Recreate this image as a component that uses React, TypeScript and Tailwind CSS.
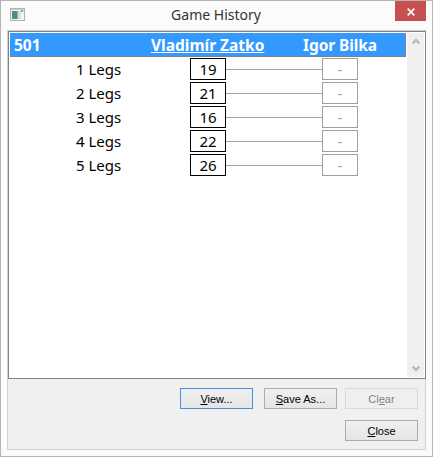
import clsx from "clsx";

// Types
type TRow = { legs: string; home: string; away: string };

// Constants
const rows: TRow[] = [
  { legs: "1 Legs", home: "19", away: "-" },
  { legs: "2 Legs", home: "21", away: "-" },
  { legs: "3 Legs", home: "16", away: "-" },
  { legs: "4 Legs", home: "22", away: "-" },
  { legs: "5 Legs", home: "26", away: "-" },
];

type TButtonProps = {
  before?: string;
  accessKey: string;
  after: string;
  focused?: boolean;
  disabled?: boolean;
};

function DialogButton({
  before = "",
  accessKey,
  after,
  focused,
  disabled,
}: TButtonProps) {
  return (
    <button
      type="button"
      disabled={disabled}
      className={clsx(
        "block h-[21px] w-[73px] border pt-px text-[11px] leading-[18px]",
        focused && "border-[#4a90d9]",
        !focused && !disabled && "border-[#acacac]",
        disabled
          ? "border-[#d9d9d9] bg-[#efefef] text-[#838383]"
          : "bg-linear-to-b from-[#f0f0f0] to-[#e5e5e5] text-black"
      )}
    >
      {before}
      <span className="underline underline-offset-1">{accessKey}</span>
      {after}
    </button>
  );
}

function Chevron({ down = false }: { down?: boolean }) {
  return (
    <svg
      viewBox="0 0 8 7"
      className={clsx("h-[7px] w-2", down && "rotate-180")}
      aria-hidden="true"
    >
      <path d="M0.8 5.4 4 2l3.2 3.4" fill="none" stroke="#b8b8b8" strokeWidth="2.3" />
    </svg>
  );
}

function TitleBar() {
  return (
    <header className="flex h-[29px] shrink-0 justify-between">
      <div className="w-[100px] pt-[7px] pl-[9px]">
        {/* Window icon */}
        <svg viewBox="0 0 15 13" className="h-[13px] w-[15px]" aria-hidden="true">
          <rect x="0.5" y="0.5" width="14" height="12" fill="#edf2f0" stroke="#adb4b1" />
          <rect x="1" y="1" width="13" height="1" fill="#c9d0ce" />
          <rect x="2" y="3" width="5" height="8" fill="#508c8e" />
          <rect x="7" y="3" width="1" height="8" fill="#8fb2af" />
          <rect x="8" y="3" width="3" height="8" fill="#d3dedb" />
          <rect x="11" y="3" width="2" height="8" fill="#f8fafa" />
          <rect x="11" y="2" width="2" height="2" fill="#79aaa6" />
        </svg>
      </div>
      <h1 className="-ml-px pt-1 font-['Noto_Sans'] text-[14px] leading-5 text-[#333]">
        Game History
      </h1>
      <div className="flex w-[100px] justify-end pr-[6px]">
        <button
          type="button"
          aria-label="Close"
          className="flex h-5 w-[31px] items-center justify-center bg-[#c75050] pt-px"
        >
          <svg viewBox="0 0 8 8" className="size-2" aria-hidden="true">
            <path d="M0.7 0.7 7.3 7.3M7.3 0.7 0.7 7.3" stroke="#fff" strokeWidth="1.7" />
          </svg>
        </button>
      </div>
    </header>
  );
}

function HistoryRow({ legs, home, away }: TRow) {
  return (
    <div className="flex h-6 items-start pt-px text-[15px] leading-[22px]">
      <div className="w-[180px] pl-[66px]">{legs}</div>
      <div className="h-[22px] w-9 border border-black text-center leading-[21px]">
        {home}
      </div>
      <div className="mt-[11px] h-px w-24 bg-[#a0a0a0]" />
      <div className="h-[22px] w-9 border border-[#a0a0a0] text-center leading-5 text-[#a0a0a0]">
        {away}
      </div>
    </div>
  );
}

export default function App() {
  return (
    <div className="flex h-[457px] w-[433px] flex-col border border-[#b5b5b5] bg-[#fbfbfb] font-['Liberation_Sans',sans-serif]">
      <TitleBar />

      <main className="mx-[6px] flex h-[420px] flex-col border border-[#d2d2d2] bg-[#f0f0f0]">
        {/* History list */}
        <section className="flex h-[348px] w-[418px] shrink-0 border border-[#828282] bg-white p-px font-['Noto_Sans',sans-serif] text-black">
          <div className="w-[397px]">
            <div className="flex h-6 w-[396px] border border-t-0 border-l-0 border-[#79818b] bg-[#3399ff] pl-1 text-[15.5px] leading-6 font-bold text-white">
              <span className="w-[137px]">501</span>
              <span className="w-[152px] underline">Vladimír Zatko</span>
              <span className="tracking-[-0.1px] whitespace-nowrap">Igor Bilka</span>
            </div>
            {rows.map((row) => (
              <HistoryRow key={row.legs} {...row} />
            ))}
          </div>

          {/* Scrollbar */}
          <div className="flex w-[17px] flex-col items-center justify-between bg-[#f0f0f0] py-[5px]">
            <Chevron />
            <Chevron down />
          </div>
        </section>

        {/* Actions */}
        <footer className="flex flex-col items-end gap-[11px] pt-[9px] pr-[7px]">
          <div className="flex">
            <DialogButton accessKey="V" after="iew..." focused />
            <div className="mr-2 ml-[11px]">
              <DialogButton accessKey="S" after="ave As..." />
            </div>
            <DialogButton before="Cl" accessKey="e" after="ar" disabled />
          </div>
          <DialogButton accessKey="C" after="lose" />
        </footer>
      </main>
    </div>
  );
}
